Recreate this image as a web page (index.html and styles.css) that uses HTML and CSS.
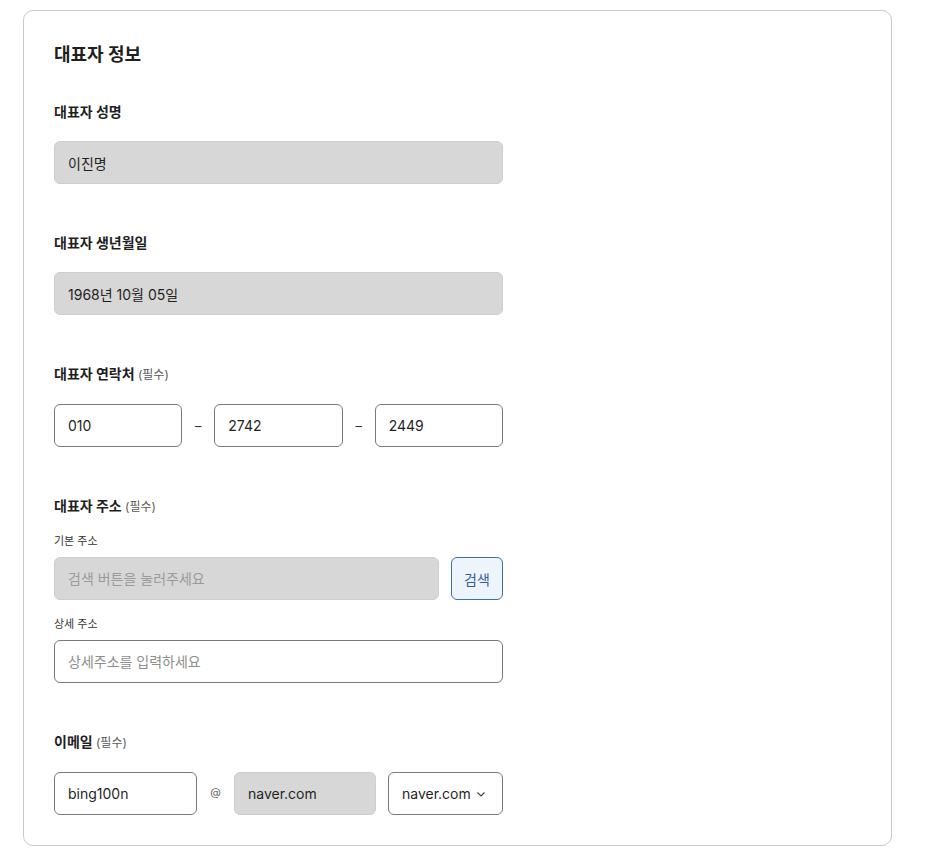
FILE: index.html
```html
<!doctype html>
<html lang="ko">
<head>
  <meta charset="utf-8" />
  <meta name="viewport" content="width=device-width, initial-scale=1" />
  <title>대표자 정보</title>
  <link rel="stylesheet" href="styles.css">
</head>
<body>
  <main class="wrap">
    <section class="card" aria-labelledby="title">
      <h1 id="title">대표자 정보</h1>

      <div class="field">
        <div class="lab">대표자 성명</div>
        <input class="inp ro" type="text" value="이진명" readonly>
      </div>

      <div class="field">
        <div class="lab">대표자 생년월일</div>
        <input class="inp ro" type="text" value="1968년 10월 05일" readonly>
      </div>

      <div class="field">
        <div class="lab">대표자 연락처 <span class="req">(필수)</span></div>
        <div class="row phone">
          <input class="inp" type="text" value="010">
          <span class="sep">–</span>
          <input class="inp" type="text" value="2742">
          <span class="sep">–</span>
          <input class="inp" type="text" value="2449">
        </div>
      </div>

      <div class="field">
        <div class="lab">대표자 주소 <span class="req">(필수)</span></div>
        <div class="sublab first">기본 주소</div>
        <div class="row addr">
          <input class="inp ro" type="text" placeholder="검색 버튼을 눌러주세요" readonly>
          <button class="btn" type="button">검색</button>
        </div>
        <div class="sublab">상세 주소</div>
        <input class="inp" type="text" placeholder="상세주소를 입력하세요">
      </div>

      <div class="field">
        <div class="lab">이메일 <span class="req">(필수)</span></div>
        <div class="row mail">
          <input class="inp id" type="text" value="bing100n">
          <span class="at">@</span>
          <input class="inp ro dom" type="text" value="naver.com" readonly>
          <div class="sel" role="button">
            <span>naver.com</span>
            <svg width="10" height="10" viewBox="0 0 10 10" aria-hidden="true"><path d="M1.5 3.5 L5 7 L8.5 3.5" fill="none" stroke="#444" stroke-width="1.2"/></svg>
          </div>
        </div>
      </div>
    </section>
  </main>
</body>
</html>
```

FILE: styles.css
```css
:root{
  --fg:#1f1f1f;
  --muted:#5a5a5a;
  --line:#c9c9c9;
  --box:#7a7a7a;
  --ro-bg:#d7d7d7;
  --ro-line:#cdcdcd;
  --blue:#3d6fae;
}

*{box-sizing:border-box}
body{
  margin:0;
  font-family: Inter, "Noto Sans CJK KR", sans-serif;
  color:var(--fg);
  background:#fff;
}

.wrap{padding:10px 34px 20px 23px}

.card{
  width:869px;
  border:1px solid var(--line);
  border-radius:10px;
  padding:31px 30px 30px 30px;
}

h1{margin:0 0 34px; font-size:18px; line-height:26px; font-weight:700}

.field + .field{margin-top:49px}
.field{width:449px}

.lab{font-size:14px; line-height:20px; font-weight:700; margin-bottom:19px}
.lab .req{font-size:12px; font-weight:400; color:var(--muted)}

.sublab{font-size:11px; line-height:16px; color:#333; margin:16px 0 8px}
.sublab.first{margin-top:-3px}

.inp{
  display:block; width:100%; height:43px; margin:0;
  border:1px solid var(--box); border-radius:6px;
  background:#fff; padding:0 13px;
  font:inherit; font-size:14px; color:var(--fg);
  outline:none;
}
.inp::placeholder{color:#8e8e8e}
.inp.ro{background:var(--ro-bg); border-color:var(--ro-line)}
.inp.ro::placeholder{color:#9a9a9a}

.row{display:flex; align-items:center}
.row .inp{flex:1 1 0; min-width:0}

.phone .sep{width:32px; text-align:center; font-size:13px; color:#333}

.addr{gap:12px}
.btn{
  flex:0 0 52px; height:43px;
  border:1px solid var(--blue); border-radius:6px;
  background:#eef4fc; color:#2f5f9e;
  font:inherit; font-size:14px; padding:0;
}

.mail .id{flex:0 0 143px}
.mail .at{width:37px; text-align:center; font-size:11px; color:#666; margin-top:-4px}
.mail .dom{flex:0 0 142px}
.sel{
  margin-left:12px; flex:1 1 auto; height:43px;
  border:1px solid var(--box); border-radius:6px;
  display:flex; align-items:center; justify-content:space-between;
  padding:0 16px 0 13px; font-size:14px;
}
.sel svg{display:block}
```
